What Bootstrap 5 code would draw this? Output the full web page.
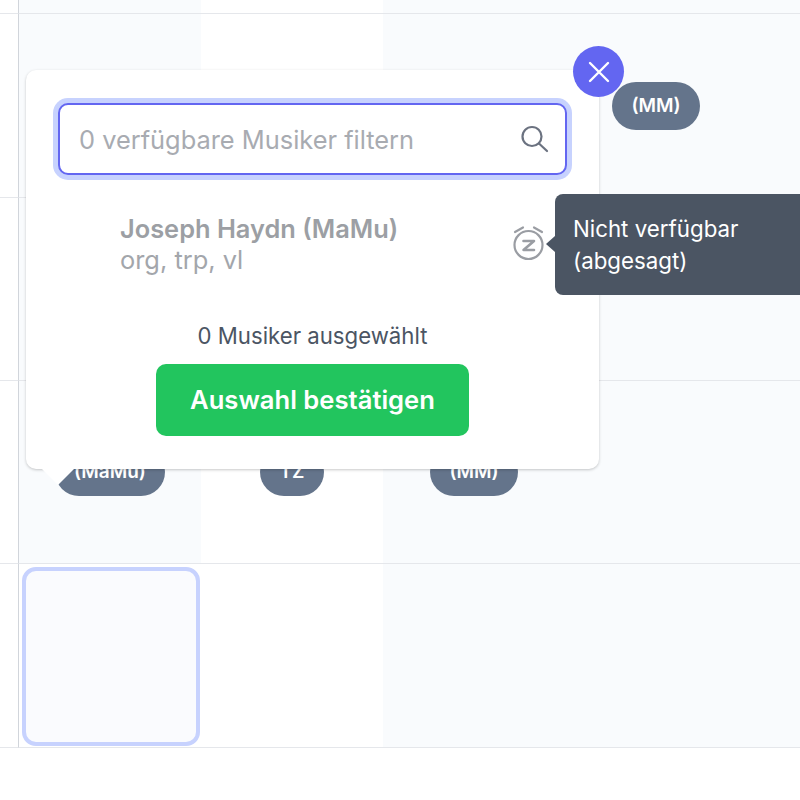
<!DOCTYPE html>
<html lang="de">

<head>
    <meta charset="UTF-8">
    <meta name="viewport" content="width=device-width, initial-scale=1.0">
    <title>Musiker Auswahl</title>
    <link href="https://cdn.jsdelivr.net/npm/bootstrap@5.3.2/dist/css/bootstrap.min.css" rel="stylesheet">
    <style>
        body {
            font-family: Inter, "Liberation Sans", sans-serif;
            color: #374151;
            overflow: hidden;
        }

        .board {
            display: grid;
            grid-template-columns: 19px repeat(4, 182px) 1fr;
            grid-template-rows: 14px 184px 183px 183px 184px;
            position: relative;
        }

        .slot {
            border-bottom: 1px solid #e5e7eb;
            display: flex;
            align-items: center;
            justify-content: center;
        }

        .slot-gutter { border-right: 1px solid #d1d5db; }
        .slot-tint { background: #f9fbfd; }

        .slot-picked {
            padding: 3px 1px 1px 3px;
            align-items: stretch;
        }

        .picked-frame {
            flex-grow: 1;
            border: 4px solid #c7d2fe;
            border-radius: 14px;
            background: #fafbfe;
        }

        .chip {
            background: #64748b;
            color: #fff;
            font-size: 19px;
            font-weight: 600;
            line-height: 24px;
            height: 48px;
            border-radius: 24px;
            padding: 12px 19.5px;
        }

        .picker {
            position: absolute;
            left: 26px;
            top: 70px;
            width: 573px;
            height: 399px;
            background: #fff;
            border-radius: 10px;
            box-shadow: 0 1px 3px rgba(0, 0, 0, .22);
            padding: 33px 32px 33px 32px;
        }

        .picker-tail {
            position: absolute;
            left: 20px;
            top: 386px;
            width: 24px;
            height: 24px;
            background: #fff;
            transform: rotate(45deg);
        }

        .filter-box { position: relative; }

        .filter-input {
            height: 72px;
            font-size: 25.4px;
            color: #374151;
            border: 2px solid #6366f1;
            border-radius: 10px;
            box-shadow: 0 0 0 5px #c7d2fe;
            padding: 0 60px 0 19px;
        }

        .filter-input::placeholder { color: #a8abb1; opacity: 1; }

        .filter-input:focus {
            border-color: #6366f1;
            box-shadow: 0 0 0 5px #c7d2fe;
        }

        .filter-icon {
            position: absolute;
            right: 16px;
            top: 20px;
        }

        .player-row {
            padding: 38px 0 0 62px;
            height: 146px;
        }

        .player-name {
            font-size: 25.4px;
            font-weight: 600;
            line-height: 32px;
            color: #9c9fa4;
        }

        .player-parts {
            font-size: 25.4px;
            line-height: 30px;
            color: #a3a6ab;
        }

        .count-line {
            font-size: 22.2px;
            line-height: 30px;
            color: #4b5563;
            margin-bottom: 13px;
        }

        .confirm-btn {
            width: 313px;
            height: 72px;
            background: #22c55e;
            border: 0;
            border-radius: 10px;
            color: #fff;
            font-size: 25.6px;
            font-weight: 600;
        }

        .close-btn {
            position: absolute;
            left: 573px;
            top: 46px;
            width: 51px;
            height: 51px;
            border: 0;
            border-radius: 50%;
            background: #6366f1;
        }

        .snooze-icon {
            position: absolute;
            left: 512px;
            top: 226px;
        }

        .hint {
            position: absolute;
            left: 555px;
            top: 194px;
            width: 245px;
            height: 101px;
            background: #4b5563;
            color: #fff;
            border-radius: 8px 0 0 8px;
            font-size: 22.3px;
            line-height: 32px;
            padding: 19px 18px;
        }

        .hint::before {
            content: "";
            position: absolute;
            left: -9px;
            top: 42px;
            border-style: solid;
            border-width: 8px 9px 8px 0;
            border-color: transparent #4b5563 transparent transparent;
        }
    </style>
</head>

<body>
    <div class="board">
        <!-- top strip -->
        <div class="slot slot-gutter"></div>
        <div class="slot slot-tint"></div>
        <div class="slot"></div>
        <div class="slot slot-tint"></div>
        <div class="slot slot-tint"></div>
        <div class="slot slot-tint"></div>

        <div class="slot slot-gutter"></div>
        <div class="slot slot-tint"></div>
        <div class="slot"></div>
        <div class="slot slot-tint"></div>
        <div class="slot slot-tint"><span class="chip">(MM)</span></div>
        <div class="slot slot-tint"></div>

        <div class="slot slot-gutter"></div>
        <div class="slot slot-tint"></div>
        <div class="slot"></div>
        <div class="slot slot-tint"></div>
        <div class="slot slot-tint"></div>
        <div class="slot slot-tint"></div>

        <div class="slot slot-gutter"></div>
        <div class="slot slot-tint"><span class="chip">(MaMu)</span></div>
        <div class="slot"><span class="chip">TZ</span></div>
        <div class="slot slot-tint"><span class="chip">(MM)</span></div>
        <div class="slot slot-tint"></div>
        <div class="slot slot-tint"></div>

        <div class="slot slot-gutter"></div>
        <div class="slot slot-picked"><div class="picked-frame"></div></div>
        <div class="slot"></div>
        <div class="slot slot-tint"></div>
        <div class="slot slot-tint"></div>
        <div class="slot slot-tint"></div>

        <!-- popup -->
        <div class="picker">
            <div class="picker-tail"></div>
            <div class="filter-box">
                <input class="form-control filter-input" type="text" placeholder="0 verfügbare Musiker filtern">
                <svg class="filter-icon" width="32" height="32" viewBox="0 0 32 32" fill="none" stroke="#6b7280" stroke-width="2.2" stroke-linecap="round">
                    <circle cx="13" cy="13.5" r="9.5"></circle>
                    <path d="M20 20.5l8 7.5"></path>
                </svg>
            </div>
            <div class="player-row">
                <div class="player-name">Joseph Haydn (MaMu)</div>
                <div class="player-parts">org, trp, vl</div>
            </div>
            <div class="count-line text-center">0 Musiker ausgewählt</div>
            <div class="text-center">
                <button class="btn confirm-btn">Auswahl bestätigen</button>
            </div>
        </div>

        <button class="close-btn d-flex align-items-center justify-content-center p-0" aria-label="Schließen">
            <svg width="24" height="24" viewBox="0 0 24 24" fill="none" stroke="#fff" stroke-width="2.4" stroke-linecap="round">
                <path d="M3 3l18 18M21 3L3 21"></path>
            </svg>
        </button>

        <svg class="snooze-icon" width="34" height="36" viewBox="0 0 34 36" fill="none" stroke="#9a9da3" stroke-width="2.2" stroke-linecap="round" stroke-linejoin="round">
            <circle cx="16.5" cy="19" r="14"></circle>
            <path d="M11.5 15h10.5l-10.5 9h10.5" stroke-width="2.6"></path>
            <path d="M3 6l8-4.5M30 6l-8-4.5"></path>
        </svg>

        <div class="hint">Nicht verfügbar<br>(abgesagt)</div>
    </div>

    <script src="https://cdn.jsdelivr.net/npm/bootstrap@5.3.2/dist/js/bootstrap.bundle.min.js"></script>
</body>

</html>
